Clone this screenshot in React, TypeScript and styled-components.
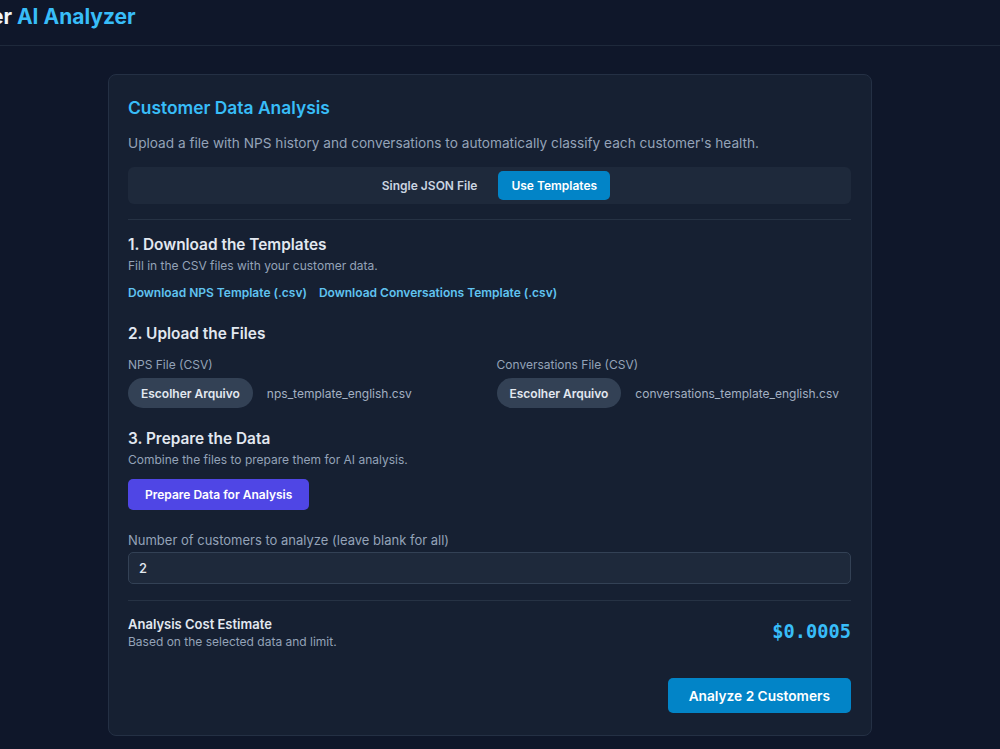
import React, { useState } from "react";
import styled, { createGlobalStyle } from "styled-components";

const GlobalStyle = createGlobalStyle`
    html, body {
        margin: 0;
        padding: 0;
        background: #0f172a;
        font-family: Inter, "Noto Sans", sans-serif;
        color: #e2e8f0;
    }
    * {
        box-sizing: border-box;
    }
`;

const Page = styled.div`
    min-height: 749px;
    background: #0f172a;
    overflow: hidden;
`;

const Header = styled.header`
    height: 46px;
    border-bottom: 1px solid #1e293b;
    display: flex;
    align-items: center;
    overflow: hidden;
`;

const Brand = styled.h1`
    margin: -13px 0 0 -89px;
    font-size: 21px;
    font-weight: 700;
    white-space: nowrap;
    color: #f1f5f9;

    span {
        color: #38bdf8;
    }
`;

const Main = styled.main`
    display: flex;
    justify-content: center;
    padding: 28px 20px 0 0;
`;

const Card = styled.section`
    width: 764px;
    background: #162032;
    border: 1px solid #243044;
    border-radius: 8px;
    padding: 20px 20px 22px 19px;
    display: flex;
    flex-direction: column;
`;

const Title = styled.h2`
    margin: 0;
    font-size: 17.4px;
    font-weight: 600;
    line-height: 26px;
    color: #38bdf8;
`;

const Description = styled.p`
    margin: 12px 0 0;
    font-size: 13.65px;
    line-height: 20px;
    color: #94a3b8;
`;

const ModeBar = styled.div`
    margin-top: 14px;
    height: 37px;
    background: #1e293b;
    border-radius: 6px;
    display: flex;
    align-items: center;
    justify-content: center;
    gap: 8px;
`;

const ModeButton = styled.button<{ $active?: boolean }>`
    height: 29px;
    padding: 0 13px;
    border: none;
    border-radius: 5px;
    font-family: inherit;
    font-size: 12px;
    font-weight: 600;
    cursor: pointer;
    background: ${(p) => (p.$active ? "#0284c7" : "transparent")};
    color: ${(p) => (p.$active ? "#ffffff" : "#cbd5e1")};
`;

const Divider = styled.hr<{ $top: number }>`
    border: none;
    border-top: 1px solid #263244;
    margin: ${(p) => p.$top}px 0 0;
`;

const Step = styled.div<{ $top: number }>`
    margin-top: ${(p) => p.$top}px;
    display: flex;
    flex-direction: column;
`;

const StepTitle = styled.h3`
    margin: 0;
    font-size: 15.4px;
    font-weight: 600;
    line-height: 24px;
    color: #e2e8f0;
`;

const StepNote = styled.p`
    margin: 0;
    font-size: 12px;
    line-height: 17px;
    color: #94a3b8;
`;

const Links = styled.div`
    margin-top: 10px;
    display: flex;
    gap: 12px;
`;

const TemplateLink = styled.a`
    font-size: 12px;
    font-weight: 600;
    line-height: 18px;
    color: #60c3f0;
    text-decoration: none;
    cursor: pointer;
`;

const UploadGrid = styled.div`
    margin-top: 10px;
    display: grid;
    grid-template-columns: 1fr 1fr;
    column-gap: 14px;
`;

const Field = styled.div`
    display: flex;
    flex-direction: column;
    gap: 5px;
`;

const FieldLabel = styled.label<{ $size?: number }>`
    font-size: ${(p) => p.$size ?? 12}px;
    line-height: 17px;
    color: #94a3b8;
`;

const FileRow = styled.div`
    display: flex;
    align-items: center;
    gap: 14px;
`;

const FileButton = styled.button`
    height: 30px;
    padding: 0 13px;
    border: none;
    border-radius: 999px;
    background: #334155;
    color: #e2e8f0;
    font-family: inherit;
    font-size: 12px;
    font-weight: 600;
    cursor: pointer;
`;

const FileName = styled.span`
    font-size: 12px;
    color: #a3b0c2;
`;

const PrepareButton = styled.button`
    margin-top: 11px;
    align-self: flex-start;
    height: 31px;
    padding: 0 17px;
    border: none;
    border-radius: 5px;
    background: #4f46e5;
    color: #ffffff;
    font-family: inherit;
    font-size: 12px;
    font-weight: 600;
    cursor: pointer;
`;

const LimitField = styled.div`
    margin-top: 22px;
    display: flex;
    flex-direction: column;
    gap: 3px;
`;

const LimitInput = styled.input`
    height: 32px;
    width: 100%;
    padding: 0 10px;
    background: #1e293b;
    border: 1px solid #334155;
    border-radius: 5px;
    color: #e2e8f0;
    font-family: inherit;
    font-size: 13px;
    font-weight: 500;
    outline: none;
`;

const CostRow = styled.div`
    margin-top: 14px;
    display: flex;
    align-items: center;
    justify-content: space-between;
`;

const CostInfo = styled.div`
    display: flex;
    flex-direction: column;
`;

const CostTitle = styled.div`
    font-size: 13px;
    font-weight: 600;
    line-height: 18px;
    color: #e2e8f0;
`;

const CostValue = styled.div`
    font-family: "DejaVu Sans Mono", "Liberation Mono", monospace;
    font-size: 18.7px;
    font-weight: 700;
    color: #38bdf8;
    margin-top: -2px;
`;

const Actions = styled.div`
    margin-top: 28px;
    display: flex;
    justify-content: flex-end;
`;

const AnalyzeButton = styled.button`
    height: 35px;
    padding: 0 21px;
    border: none;
    border-radius: 5px;
    background: #0284c7;
    color: #ffffff;
    font-family: inherit;
    font-size: 13.7px;
    font-weight: 600;
    cursor: pointer;
`;

const App: React.FC = () => {
    const [mode, setMode] = useState<"json" | "templates">("templates");
    const [limit, setLimit] = useState("2");

    return (
        <Page>
            <GlobalStyle />
            <Header>
                <Brand>
                    Customer <span>AI Analyzer</span>
                </Brand>
            </Header>
            <Main>
                <Card>
                    <Title>Customer Data Analysis</Title>
                    <Description>
                        Upload a file with NPS history and conversations to automatically classify each customer's health.
                    </Description>

                    <ModeBar>
                        <ModeButton $active={mode === "json"} onClick={() => setMode("json")}>
                            Single JSON File
                        </ModeButton>
                        <ModeButton $active={mode === "templates"} onClick={() => setMode("templates")}>
                            Use Templates
                        </ModeButton>
                    </ModeBar>

                    <Divider $top={15} />

                    <Step $top={13}>
                        <StepTitle>1. Download the Templates</StepTitle>
                        <StepNote>Fill in the CSV files with your customer data.</StepNote>
                        <Links>
                            <TemplateLink>Download NPS Template (.csv)</TemplateLink>
                            <TemplateLink>Download Conversations Template (.csv)</TemplateLink>
                        </Links>
                    </Step>

                    <Step $top={20}>
                        <StepTitle>2. Upload the Files</StepTitle>
                        <UploadGrid>
                            <Field>
                                <FieldLabel>NPS File (CSV)</FieldLabel>
                                <FileRow>
                                    <FileButton>Escolher Arquivo</FileButton>
                                    <FileName>nps_template_english.csv</FileName>
                                </FileRow>
                            </Field>
                            <Field>
                                <FieldLabel>Conversations File (CSV)</FieldLabel>
                                <FileRow>
                                    <FileButton>Escolher Arquivo</FileButton>
                                    <FileName>conversations_template_english.csv</FileName>
                                </FileRow>
                            </Field>
                        </UploadGrid>
                    </Step>

                    <Step $top={19}>
                        <StepTitle>3. Prepare the Data</StepTitle>
                        <StepNote>Combine the files to prepare them for AI analysis.</StepNote>
                        <PrepareButton>Prepare Data for Analysis</PrepareButton>
                    </Step>

                    <LimitField>
                        <FieldLabel $size={13}>Number of customers to analyze (leave blank for all)</FieldLabel>
                        <LimitInput value={limit} onChange={(e) => setLimit(e.target.value)} />
                    </LimitField>

                    <Divider $top={16} />

                    <CostRow>
                        <CostInfo>
                            <CostTitle>Analysis Cost Estimate</CostTitle>
                            <StepNote>Based on the selected data and limit.</StepNote>
                        </CostInfo>
                        <CostValue>$0.0005</CostValue>
                    </CostRow>

                    <Actions>
                        <AnalyzeButton>Analyze {limit || "All"} Customers</AnalyzeButton>
                    </Actions>
                </Card>
            </Main>
        </Page>
    );
};

export default App;
